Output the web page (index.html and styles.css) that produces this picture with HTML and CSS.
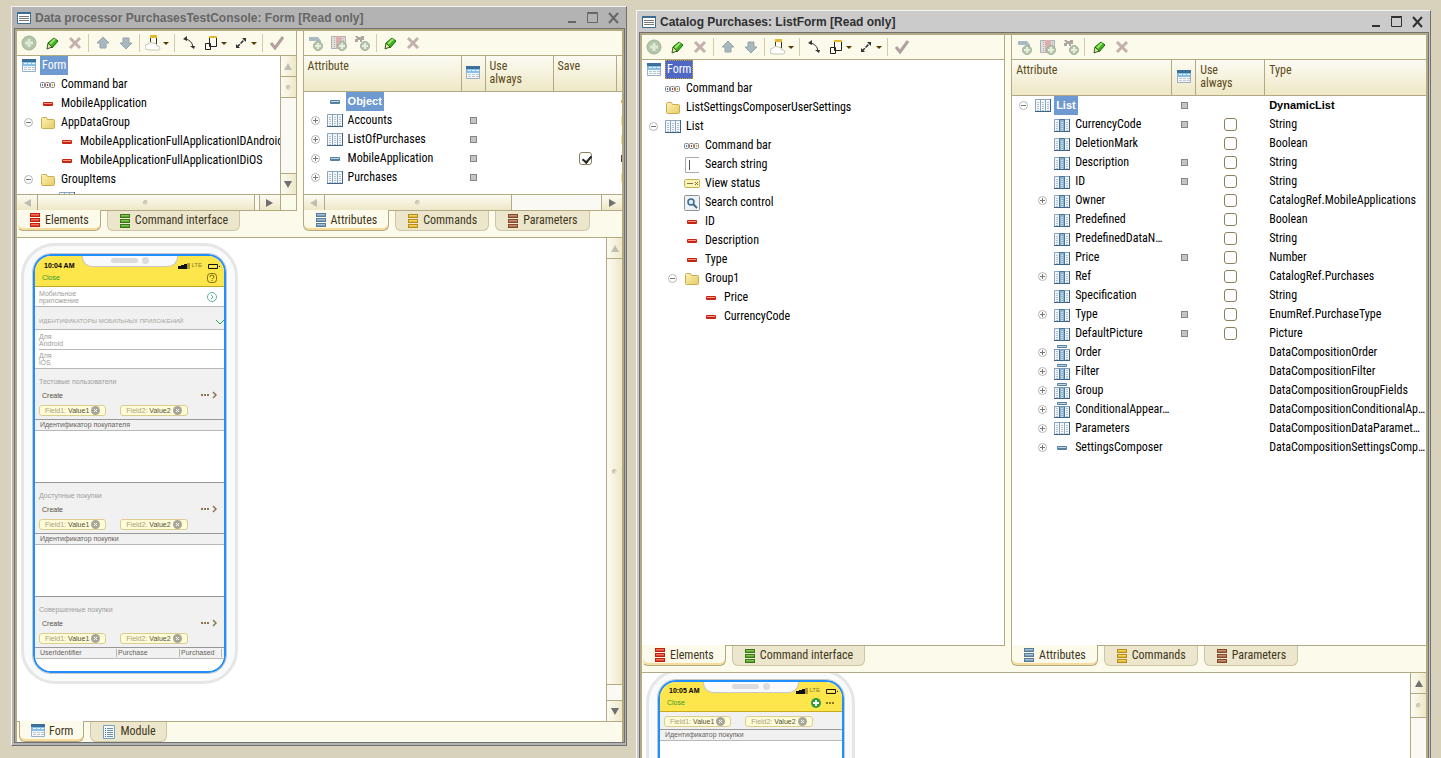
FILE: index.html
```html
<!DOCTYPE html>
<html lang="en">
<head>
  <meta charset="UTF-8">
  <meta name="viewport" content="width=device-width, initial-scale=1.0">
  <title>Designer</title>
  <link rel="stylesheet" href="styles.css">
</head>
<body>
  <!-- Icon set -->
  <svg class="sprite" aria-hidden="true">
    <defs>
      <linearGradient id="g-red" x1="0" y1="0" x2="0" y2="1"><stop offset="0" stop-color="#ff9a80"/><stop offset="1" stop-color="#d8200c"/></linearGradient>
      <linearGradient id="g-green" x1="0" y1="0" x2="0" y2="1"><stop offset="0" stop-color="#a8e070"/><stop offset="1" stop-color="#3c8c18"/></linearGradient>
      <linearGradient id="g-blue" x1="0" y1="0" x2="0" y2="1"><stop offset="0" stop-color="#c4dcec"/><stop offset="1" stop-color="#5c86a8"/></linearGradient>
      <linearGradient id="g-gold" x1="0" y1="0" x2="0" y2="1"><stop offset="0" stop-color="#fff080"/><stop offset="1" stop-color="#d8a018"/></linearGradient>
      <linearGradient id="g-brown" x1="0" y1="0" x2="0" y2="1"><stop offset="0" stop-color="#dca888"/><stop offset="1" stop-color="#94583c"/></linearGradient>
      <linearGradient id="g-folder" x1="0" y1="0" x2="1" y2="1"><stop offset="0" stop-color="#fdf3b0"/><stop offset="1" stop-color="#e6cb68"/></linearGradient>
    </defs>
    <symbol id="i-form" viewBox="0 0 16 16">
      <path fill="#f4f8fb" stroke="#9ab0c2" d="M1.500 2.500h13v11h-13z"/>
      <path fill="#3a7099" d="M1 1h14v3H1z"/><path fill="#86c0e8" d="M2 4h12v4H2z"/>
      <path stroke="#e4f2fb" stroke-dasharray="3 1" d="M3 5.500h11"/>
      <path stroke="#bcc6ce" stroke-dasharray="3 1" d="M3 9.500h11M3 11.500h11"/>
    </symbol>
    <symbol id="i-win" viewBox="0 0 16 16">
      <path fill="#fff" stroke="#3c6c90" d="M1.500 2.500h13v11h-13z"/>
      <path fill="#3c6c90" d="M1 2h14v2H1z"/>
      <path stroke="#777" d="M3 6.500h10M3 8.500h10M3 10.500h10"/>
    </symbol>
    <symbol id="i-module" viewBox="0 0 16 16">
      <path fill="#f6fafd" stroke="#7ba0bc" d="M2.500 1.500h11v13h-11z"/>
      <path stroke="#6f8ea8" d="M6 4.500h6M6 6.500h6M6 8.500h6M6 10.500h6M6 12.500h6"/>
      <path stroke="#3c6c90" d="M4 4.500h1M4 6.500h1M4 8.500h1M4 10.500h1M4 12.500h1"/>
    </symbol>
    <symbol id="i-cmdbar" viewBox="0 0 16 16">
      <g fill="#f5f5f5" stroke="#858585"><rect x=".5" y="5.500" width="4" height="5" rx="1"/><rect x="5.500" y="5.500" width="4" height="5" rx="1"/><rect x="10.500" y="5.500" width="4" height="5" rx="1"/></g>
      <path fill="#3f80c8" d="M2 7h1v2H2z"/><path fill="#d82c18" d="M7 7h1v2H7z"/><path fill="#d8a818" d="M12 7h1v2h-1z"/>
    </symbol>
    <symbol id="i-item" viewBox="0 0 16 16"><rect x="3" y="6" width="10" height="4" rx="1" fill="#c82414"/><path fill="#ff9a80" d="M4 7h8v1H4z"/></symbol>
    <symbol id="i-attr" viewBox="0 0 16 16"><rect x="3" y="6" width="10" height="4" rx="1" fill="#5680a0"/><path fill="#bcd6e8" d="M4 7h8v1H4z"/></symbol>
    <symbol id="i-folder" viewBox="0 0 16 16">
      <path fill="url(#g-folder)" stroke="#c9ad54" d="M1.500 12.500v-9q0-1 1-1h4l1 2h6q1 0 1 1v7q0 1-1 1h-11q-1 0-1-1z"/>
    </symbol>
    <symbol id="i-table" viewBox="0 0 16 16">
      <path fill="#f4f8fb" stroke="#8ba6bc" d="M.5 1.500h15v12H.5zM5.500 1.500v12M10.500 1.500v12"/>
      <path stroke="#3c6488" d="M0 13.500h16M15.500 1v13"/>
      <path stroke="#b4c0ca" stroke-dasharray="1 1" stroke-width="2" d="M3 4v9M8 4v9M13 4v9"/>
    </symbol>
    <symbol id="i-column" viewBox="0 0 16 16">
      <path fill="#eff4f8" stroke="#8ba6bc" d="M.5 2.500h15v12H.5z"/>
      <path fill="#8ab4d2" stroke="#4a7496" d="M5.500 2.500h5v12h-5z"/>
      <path stroke="#3c6488" d="M0 14.500h16M15.500 2v13"/>
      <path stroke="#b4c0ca" stroke-dasharray="1 1" stroke-width="2" d="M3 5v9M13 5v9"/>
      <path stroke="#c4dcec" stroke-dasharray="1 1" stroke-width="2" d="M8 5v9"/>
    </symbol>
    <symbol id="i-column-set" viewBox="0 0 16 16">
      <use href="#i-column" y="1"/>
      <path fill="#fff" d="M0 0h16v4H0z"/>
      <rect x="3" y="0" width="10" height="3" rx="1" fill="#5680a0"/><path fill="#bcd6e8" d="M4 1h8v1H4z"/>
      <path stroke="#7c9ab4" d="M0 4.500h16"/>
      <path stroke="#3c6488" d="M0 15.500h16"/>
    </symbol>
    <symbol id="i-string" viewBox="0 0 16 16"><path fill="none" stroke="#aaa" d="M15 .5H1.500v15H15"/><path stroke="#555" d="M5.500 3v10"/></symbol>
    <symbol id="i-status" viewBox="0 0 16 16"><rect x=".5" y="3.500" width="15" height="8" rx="1" fill="#fbf4b8" stroke="#c8b254"/><path stroke="#88743c" d="M3 7.500h6M11 6l3 3M14 6l-3 3"/></symbol>
    <symbol id="i-search" viewBox="0 0 16 16"><rect x=".5" y=".5" width="15" height="15" rx="1" fill="#f0f1f2" stroke="#8c9298"/><circle cx="7" cy="7" r="3" fill="#dcecf6" stroke="#3e6a92" stroke-width="1.500"/><path stroke="#3e6a92" stroke-width="2" d="M9 9l4 4"/></symbol>
    <symbol id="i-add" viewBox="0 0 16 16"><circle cx="8" cy="8" r="7" fill="#b4c6a8" stroke="#a2b29a"/><path stroke="#dfe8d4" stroke-width="3" d="M8 4v8M4 8h8"/></symbol>
    <symbol id="i-edit" viewBox="0 0 16 16"><path fill="#3eb41c" stroke="#186808" d="M4 8l6-5 4 3-6 7z"/><path stroke="#98e870" stroke-width="2" d="M6 9l5-5"/><path fill="#e8e0b8" stroke="#2c6010" d="M4 8l4 4-5 2z"/></symbol>
    <symbol id="i-del" viewBox="0 0 16 16"><path stroke="#c4b0ac" stroke-width="3" d="M3 3l10 10M13 3L3 13"/></symbol>
    <symbol id="i-up" viewBox="0 0 16 16"><path fill="#a9b7bf" stroke="#94a5ae" d="M8 2l6 6h-3v5H5V8H2z"/></symbol>
    <symbol id="i-down" viewBox="0 0 16 16"><path fill="#a9b7bf" stroke="#94a5ae" d="M8 14l6-6h-3V3H5v5H2z"/></symbol>
    <symbol id="i-cloud" viewBox="0 0 16 16"><path fill="#fffdf0" stroke="#333" d="M5.500 1.500h6v9h-6z"/><path fill="#e6b830" d="M5 0h7v3H5z"/><path fill="#fff" stroke="#c8c4b4" d="M3 15a3 3 0 0 1 0-6q2-3 5-1 4 0 4 3 3 0 3 2t-2 2z"/></symbol>
    <symbol id="i-rotate" viewBox="0 0 16 16"><path fill="none" stroke="#333" d="M4 4q7 1 8 8"/><path fill="#333" d="M2 4l4-3v5zM13 14l-4-3h5z"/></symbol>
    <symbol id="i-device" viewBox="0 0 16 16"><path fill="#fffdf0" stroke="#222" d="M6.500 1.500h7v10h-7zM2.500 8.500h5v6h-5z"/><path fill="#e6b830" d="M6 1h8v2H6z"/></symbol>
    <symbol id="i-scale" viewBox="0 0 16 16"><path stroke="#333" stroke-width="1.500" stroke-dasharray="4 1" d="M4 12l8-8"/><path fill="#333" d="M13 3v4L9 3zM3 13V9l4 4z"/></symbol>
    <symbol id="i-check" viewBox="0 0 16 16"><path fill="none" stroke="#b2a0a0" stroke-width="3" d="M2 8l4 5 8-11"/></symbol>
    <symbol id="i-add-attr" viewBox="0 0 16 16"><path fill="#a8bac4" d="M1 2h9l3 4v2H9V6H1z"/><circle cx="10" cy="11" r="4.500" fill="#b4c6a8" stroke="#a2b29a"/><path stroke="#e8efe0" stroke-width="2" d="M10 8v6M7 11h6"/></symbol>
    <symbol id="i-add-col" viewBox="0 0 16 16"><path fill="#e2dfd8" stroke="#a9b2b8" d="M.5 1.500h14v12H.5z"/><path fill="#dcb0ac" d="M5 1h6v13H5z"/><path stroke="#a9b2b8" stroke-dasharray="1 1" d="M3.500 3v10M12.500 3v10"/><circle cx="11" cy="11" r="4.500" fill="#b4c6a8" stroke="#a2b29a"/><path stroke="#e8efe0" stroke-width="2" d="M11 8v6M8 11h6"/></symbol>
    <symbol id="i-add-fx" viewBox="0 0 16 16"><path fill="#b0a8a0" d="M1 1h3v1h3V1h3v4H8v2H6V5H4v2H1V4h2z"/><circle cx="11" cy="11" r="4.500" fill="#b4c6a8" stroke="#a2b29a"/><path stroke="#e8efe0" stroke-width="2" d="M11 8v6M8 11h6"/></symbol>
    <symbol id="i-plus" viewBox="0 0 9 9"><circle cx="4.500" cy="4.500" r="4" fill="#fff" stroke="#b4b4b4"/><path stroke="#777" d="M2 4.500h5M4.500 2v5"/></symbol>
    <symbol id="i-minus" viewBox="0 0 9 9"><circle cx="4.500" cy="4.500" r="4" fill="#fff" stroke="#b4b4b4"/><path stroke="#777" d="M2 4.500h5"/></symbol>
    <symbol id="i-bars" viewBox="0 0 10 14">
      <g stroke="currentColor"><rect x=".5" y=".5" width="9" height="3"/><rect x=".5" y="5.500" width="9" height="3"/><rect x=".5" y="10.500" width="9" height="3"/></g>
    </symbol>
    <symbol id="i-signal" viewBox="0 0 12 6"><path fill="#111" d="M0 3h3V2h3V1h3v5H0z"/><path fill="#b09a30" d="M9 0h3v6H9z"/></symbol>
    <symbol id="i-battery" viewBox="0 0 12 6"><path fill="none" stroke="#111" d="M.5 1.500h9v4h-9z"/><path fill="#111" d="M11 3h1v1h-1z"/></symbol>
    <symbol id="i-x" viewBox="0 0 9 9"><circle cx="4.500" cy="4.500" r="4.500" fill="#a8a698"/><path stroke="#fff" d="M3 3l3 3M6 3L3 6"/></symbol>
    <symbol id="i-more" viewBox="0 0 16 8"><path fill="#8a7650" d="M0 3h2v2H0zM3 3h2v2H3zM6 3h2v2H6z"/><path fill="none" stroke="#8a7650" stroke-width="1.500" d="M12 1l3 3-3 3"/></symbol>
  </svg>

  <main class="desktop">
    <!-- Data processor form -->
    <section class="window inactive">
      <header class="titlebar">
        <svg class="icon"><use href="#i-win"/></svg>
        <h1>Data processor PurchasesTestConsole: Form [Read only]</h1>
        <button class="win-btn" aria-label="Minimize"><svg viewBox="0 0 12 12"><path d="M1 10h8"/></svg></button>
        <button class="win-btn" aria-label="Maximize"><svg viewBox="0 0 12 12"><path class="thin" d="M.5 1.500h10v9H.5zM0 .5h11"/></svg></button>
        <button class="win-btn" aria-label="Close"><svg viewBox="0 0 12 12"><path d="M2 1l9 10M11 1L2 11"/></svg></button>
      </header>
      <div class="client">
        <div class="split">
          <div class="pane elements">
            <div class="toolbar">
              <button aria-label="Add"><svg class="icon"><use href="#i-add"/></svg></button>
              <button aria-label="Edit"><svg class="icon"><use href="#i-edit"/></svg></button>
              <button aria-label="Delete"><svg class="icon"><use href="#i-del"/></svg></button>
              <i class="sep"></i>
              <button aria-label="Move up"><svg class="icon"><use href="#i-up"/></svg></button>
              <button aria-label="Move down"><svg class="icon"><use href="#i-down"/></svg></button>
              <i class="sep"></i>
              <button class="drop" aria-label="Cloud"><svg class="icon"><use href="#i-cloud"/></svg></button>
              <i class="sep"></i>
              <button aria-label="Rotate"><svg class="icon"><use href="#i-rotate"/></svg></button>
              <button class="drop" aria-label="Device"><svg class="icon"><use href="#i-device"/></svg></button>
              <button class="drop" aria-label="Scale"><svg class="icon"><use href="#i-scale"/></svg></button>
              <i class="sep"></i>
              <button aria-label="Check"><svg class="icon"><use href="#i-check"/></svg></button>
            </div>
            <div class="scroll-area">
              <ul class="tree">
                <li><svg class="icon"><use href="#i-form"/></svg><span class="label selected">Form</span></li>
                <li class="l1"><svg class="icon"><use href="#i-cmdbar"/></svg><span class="label">Command bar</span></li>
                <li class="l1"><svg class="icon"><use href="#i-item"/></svg><span class="label">MobileApplication</span></li>
                <li class="l1"><button class="expander" aria-label="Collapse"><svg><use href="#i-minus"/></svg></button><svg class="icon"><use href="#i-folder"/></svg><span class="label">AppDataGroup</span></li>
                <li class="l2"><svg class="icon"><use href="#i-item"/></svg><span class="label">MobileApplicationFullApplicationIDAndroid</span></li>
                <li class="l2"><svg class="icon"><use href="#i-item"/></svg><span class="label">MobileApplicationFullApplicationIDiOS</span></li>
                <li class="l1"><button class="expander" aria-label="Collapse"><svg><use href="#i-minus"/></svg></button><svg class="icon"><use href="#i-folder"/></svg><span class="label">GroupItems</span></li>
                <li class="l2"><svg class="icon"><use href="#i-table"/></svg></li>
              </ul>
              <div class="vscroll"><i class="arrow up off"></i><i class="thumb short"></i><i class="track"></i><i class="arrow down"></i></div>
              <div class="hscroll"><i class="arrow left off"></i><i class="thumb"></i><i class="track narrow"></i><i class="arrow right"></i></div>
              <div class="corner"></div>
            </div>
          </div>
          <div class="pane attributes">
            <div class="toolbar">
              <button aria-label="Add attribute"><svg class="icon"><use href="#i-add-attr"/></svg></button>
              <button aria-label="Add column"><svg class="icon"><use href="#i-add-col"/></svg></button>
              <button aria-label="Add parameter"><svg class="icon"><use href="#i-add-fx"/></svg></button>
              <i class="sep"></i>
              <button aria-label="Edit"><svg class="icon"><use href="#i-edit"/></svg></button>
              <button aria-label="Delete"><svg class="icon"><use href="#i-del"/></svg></button>
            </div>
            <div class="table-area">
              <table>
                <colgroup><col class="c-name"><col class="c-used"><col class="c-use"><col class="c-save"><col></colgroup>
                <thead><tr><th>Attribute</th><th class="mark"><svg class="icon"><use href="#i-form"/></svg></th><th>Use<br>always</th><th>Save</th><th></th></tr></thead>
                <tbody>
                  <tr><td><div class="cell l1"><svg class="icon"><use href="#i-attr"/></svg><span class="label selected bold">Object</span></div></td><td></td><td></td><td></td><td class="edge orange"></td></tr>
                  <tr><td><div class="cell l1"><button class="expander" aria-label="Expand"><svg><use href="#i-plus"/></svg></button><svg class="icon"><use href="#i-table"/></svg><span class="label">Accounts</span></div></td><td class="mark"><i class="square"></i></td><td></td><td></td><td class="edge"></td></tr>
                  <tr><td><div class="cell l1"><button class="expander" aria-label="Expand"><svg><use href="#i-plus"/></svg></button><svg class="icon"><use href="#i-table"/></svg><span class="label">ListOfPurchases</span></div></td><td class="mark"><i class="square"></i></td><td></td><td></td><td class="edge"></td></tr>
                  <tr><td><div class="cell l1"><button class="expander" aria-label="Expand"><svg><use href="#i-plus"/></svg></button><svg class="icon"><use href="#i-attr"/></svg><span class="label">MobileApplication</span></div></td><td class="mark"><i class="square"></i></td><td></td><td class="mark"><input type="checkbox" aria-label="Save MobileApplication" checked></td><td class="edge dark"></td></tr>
                  <tr><td><div class="cell l1"><button class="expander" aria-label="Expand"><svg><use href="#i-plus"/></svg></button><svg class="icon"><use href="#i-table"/></svg><span class="label">Purchases</span></div></td><td class="mark"><i class="square"></i></td><td></td><td></td><td class="edge"></td></tr>
                </tbody>
              </table>
              <div class="hscroll"><i class="arrow left off"></i><i class="thumb"></i><i class="track third"></i><i class="arrow right"></i></div>
            </div>
          </div>
        </div>
        <div class="strip">
          <nav class="tabs elements">
            <button class="tab active"><svg class="bars red"><use href="#i-bars"/></svg>Elements</button>
            <button class="tab"><svg class="bars green"><use href="#i-bars"/></svg>Command interface</button>
          </nav>
          <nav class="tabs attributes">
            <button class="tab active"><svg class="bars blue"><use href="#i-bars"/></svg>Attributes</button>
            <button class="tab"><svg class="bars gold"><use href="#i-bars"/></svg>Commands</button>
            <button class="tab"><svg class="bars brown"><use href="#i-bars"/></svg>Parameters</button>
          </nav>
        </div>
        <div class="preview">
          <div class="canvas">
            <div class="phone">
              <div class="screen">
                <div class="notch"><i class="speaker"></i><i class="camera"></i></div>
                <div class="app-head">
                  <div class="status"><b>10:04 AM</b><svg class="signal"><use href="#i-signal"/></svg><span>LTE</span><svg class="battery"><use href="#i-battery"/></svg></div>
                  <div class="app-bar"><a href="#">Close</a><svg class="help" viewBox="0 0 10 10"><rect x=".5" y=".5" width="9" height="9" rx="3"/><path d="M3 4q0-2 2-2t2 2q0 1-2 2M5 7v1"/></svg></div>
                </div>
                <div class="field"><span>Мобильное<br>приложение</span><svg class="go" viewBox="0 0 10 10"><circle cx="5" cy="5" r="4.500"/><path d="M4 3l2 2-2 2"/></svg></div>
                <div class="section"><span>ИДЕНТИФИКАТОРЫ МОБИЛЬНЫХ ПРИЛОЖЕНИЙ</span><svg class="chev" viewBox="0 0 8 6"><path d="M0 1l4 4 4-4"/></svg></div>
                <div class="field inset"><span>Для<br>Android</span></div>
                <div class="field"><span>Для<br>iOS</span></div>
                <div class="group">
                  <h2>Тестовые пользователи</h2>
                  <div class="create"><a href="#">Create</a><svg class="more"><use href="#i-more"/></svg></div>
                  <div class="chips"><span class="chip"><em>Field1:</em> Value1<svg><use href="#i-x"/></svg></span><span class="chip"><em>Field2:</em> Value2<svg><use href="#i-x"/></svg></span></div>
                </div>
                <div class="list-head"><span>Идентификатор покупателя</span></div>
                <div class="list-body"></div>
                <div class="group">
                  <h2>Доступные покупки</h2>
                  <div class="create"><a href="#">Create</a><svg class="more"><use href="#i-more"/></svg></div>
                  <div class="chips"><span class="chip"><em>Field1:</em> Value1<svg><use href="#i-x"/></svg></span><span class="chip"><em>Field2:</em> Value2<svg><use href="#i-x"/></svg></span></div>
                </div>
                <div class="list-head"><span>Идентификатор покупки</span></div>
                <div class="list-body"></div>
                <div class="group">
                  <h2>Совершенные покупки</h2>
                  <div class="create"><a href="#">Create</a><svg class="more"><use href="#i-more"/></svg></div>
                  <div class="chips"><span class="chip"><em>Field1:</em> Value1<svg><use href="#i-x"/></svg></span><span class="chip"><em>Field2:</em> Value2<svg><use href="#i-x"/></svg></span></div>
                </div>
                <div class="list-head cols"><span>UserIdentifier</span><span>Purchase</span><span>Purchased</span><span></span></div>
                <div class="list-end"></div>
              </div>
            </div>
          </div>
          <div class="vscroll"><i class="arrow up off"></i><i class="thumb"></i><i class="track tiny"></i><i class="arrow down"></i></div>
        </div>
        <nav class="tabs bottom">
          <button class="tab active"><svg class="icon"><use href="#i-form"/></svg>Form</button>
          <button class="tab"><svg class="icon"><use href="#i-module"/></svg>Module</button>
        </nav>
      </div>
    </section>

    <!-- Catalog list form -->
    <section class="window current">
      <header class="titlebar">
        <svg class="icon"><use href="#i-win"/></svg>
        <h1>Catalog Purchases: ListForm [Read only]</h1>
        <button class="win-btn" aria-label="Minimize"><svg viewBox="0 0 12 12"><path d="M1 10h8"/></svg></button>
        <button class="win-btn" aria-label="Maximize"><svg viewBox="0 0 12 12"><path class="thin" d="M.5 1.500h10v9H.5zM0 .5h11"/></svg></button>
        <button class="win-btn" aria-label="Close"><svg viewBox="0 0 12 12"><path d="M2 1l9 10M11 1L2 11"/></svg></button>
      </header>
      <div class="client">
        <div class="split">
          <div class="pane elements">
            <div class="toolbar">
              <button aria-label="Add"><svg class="icon"><use href="#i-add"/></svg></button>
              <button aria-label="Edit"><svg class="icon"><use href="#i-edit"/></svg></button>
              <button aria-label="Delete"><svg class="icon"><use href="#i-del"/></svg></button>
              <i class="sep"></i>
              <button aria-label="Move up"><svg class="icon"><use href="#i-up"/></svg></button>
              <button aria-label="Move down"><svg class="icon"><use href="#i-down"/></svg></button>
              <i class="sep"></i>
              <button class="drop" aria-label="Cloud"><svg class="icon"><use href="#i-cloud"/></svg></button>
              <i class="sep"></i>
              <button aria-label="Rotate"><svg class="icon"><use href="#i-rotate"/></svg></button>
              <button class="drop" aria-label="Device"><svg class="icon"><use href="#i-device"/></svg></button>
              <button class="drop" aria-label="Scale"><svg class="icon"><use href="#i-scale"/></svg></button>
              <i class="sep"></i>
              <button aria-label="Check"><svg class="icon"><use href="#i-check"/></svg></button>
            </div>
            <ul class="tree">
              <li><svg class="icon"><use href="#i-form"/></svg><span class="label selected focus">Form</span></li>
              <li class="l1"><svg class="icon"><use href="#i-cmdbar"/></svg><span class="label">Command bar</span></li>
              <li class="l1"><svg class="icon"><use href="#i-folder"/></svg><span class="label">ListSettingsComposerUserSettings</span></li>
              <li class="l1"><button class="expander" aria-label="Collapse"><svg><use href="#i-minus"/></svg></button><svg class="icon"><use href="#i-table"/></svg><span class="label">List</span></li>
              <li class="l2"><svg class="icon"><use href="#i-cmdbar"/></svg><span class="label">Command bar</span></li>
              <li class="l2"><svg class="icon"><use href="#i-string"/></svg><span class="label">Search string</span></li>
              <li class="l2"><svg class="icon"><use href="#i-status"/></svg><span class="label">View status</span></li>
              <li class="l2"><svg class="icon"><use href="#i-search"/></svg><span class="label">Search control</span></li>
              <li class="l2"><svg class="icon"><use href="#i-item"/></svg><span class="label">ID</span></li>
              <li class="l2"><svg class="icon"><use href="#i-item"/></svg><span class="label">Description</span></li>
              <li class="l2"><svg class="icon"><use href="#i-item"/></svg><span class="label">Type</span></li>
              <li class="l2"><button class="expander" aria-label="Collapse"><svg><use href="#i-minus"/></svg></button><svg class="icon"><use href="#i-folder"/></svg><span class="label">Group1</span></li>
              <li class="l3"><svg class="icon"><use href="#i-item"/></svg><span class="label">Price</span></li>
              <li class="l3"><svg class="icon"><use href="#i-item"/></svg><span class="label">CurrencyCode</span></li>
            </ul>
          </div>
          <div class="pane attributes">
            <div class="toolbar">
              <button aria-label="Add attribute"><svg class="icon"><use href="#i-add-attr"/></svg></button>
              <button aria-label="Add column"><svg class="icon"><use href="#i-add-col"/></svg></button>
              <button aria-label="Add parameter"><svg class="icon"><use href="#i-add-fx"/></svg></button>
              <i class="sep"></i>
              <button aria-label="Edit"><svg class="icon"><use href="#i-edit"/></svg></button>
              <button aria-label="Delete"><svg class="icon"><use href="#i-del"/></svg></button>
            </div>
            <div class="table-area">
              <table>
                <colgroup><col class="c-name"><col class="c-used"><col class="c-use"><col></colgroup>
                <thead><tr><th>Attribute</th><th class="mark"><svg class="icon"><use href="#i-form"/></svg></th><th>Use<br>always</th><th>Type</th></tr></thead>
                <tbody>
                  <tr><td><div class="cell l1"><button class="expander" aria-label="Collapse"><svg><use href="#i-minus"/></svg></button><svg class="icon"><use href="#i-table"/></svg><span class="label selected bold">List</span></div></td><td class="mark"><i class="square"></i></td><td></td><td class="bold">DynamicList</td></tr>
                  <tr><td><div class="cell l2"><svg class="icon"><use href="#i-column"/></svg><span class="label">CurrencyCode</span></div></td><td class="mark"><i class="square"></i></td><td class="mark"><input type="checkbox" aria-label="Use always CurrencyCode"></td><td>String</td></tr>
                  <tr><td><div class="cell l2"><svg class="icon"><use href="#i-column"/></svg><span class="label">DeletionMark</span></div></td><td></td><td class="mark"><input type="checkbox" aria-label="Use always DeletionMark"></td><td>Boolean</td></tr>
                  <tr><td><div class="cell l2"><svg class="icon"><use href="#i-column"/></svg><span class="label">Description</span></div></td><td class="mark"><i class="square"></i></td><td class="mark"><input type="checkbox" aria-label="Use always Description"></td><td>String</td></tr>
                  <tr><td><div class="cell l2"><svg class="icon"><use href="#i-column"/></svg><span class="label">ID</span></div></td><td class="mark"><i class="square"></i></td><td class="mark"><input type="checkbox" aria-label="Use always ID"></td><td>String</td></tr>
                  <tr><td><div class="cell l2"><button class="expander" aria-label="Expand"><svg><use href="#i-plus"/></svg></button><svg class="icon"><use href="#i-column"/></svg><span class="label">Owner</span></div></td><td></td><td class="mark"><input type="checkbox" aria-label="Use always Owner"></td><td>CatalogRef.MobileApplications</td></tr>
                  <tr><td><div class="cell l2"><svg class="icon"><use href="#i-column"/></svg><span class="label">Predefined</span></div></td><td></td><td class="mark"><input type="checkbox" aria-label="Use always Predefined"></td><td>Boolean</td></tr>
                  <tr><td><div class="cell l2"><svg class="icon"><use href="#i-column"/></svg><span class="label">PredefinedDataN…</span></div></td><td></td><td class="mark"><input type="checkbox" aria-label="Use always PredefinedDataN"></td><td>String</td></tr>
                  <tr><td><div class="cell l2"><svg class="icon"><use href="#i-column"/></svg><span class="label">Price</span></div></td><td class="mark"><i class="square"></i></td><td class="mark"><input type="checkbox" aria-label="Use always Price"></td><td>Number</td></tr>
                  <tr><td><div class="cell l2"><button class="expander" aria-label="Expand"><svg><use href="#i-plus"/></svg></button><svg class="icon"><use href="#i-column"/></svg><span class="label">Ref</span></div></td><td></td><td class="mark"><input type="checkbox" aria-label="Use always Ref"></td><td>CatalogRef.Purchases</td></tr>
                  <tr><td><div class="cell l2"><svg class="icon"><use href="#i-column"/></svg><span class="label">Specification</span></div></td><td></td><td class="mark"><input type="checkbox" aria-label="Use always Specification"></td><td>String</td></tr>
                  <tr><td><div class="cell l2"><button class="expander" aria-label="Expand"><svg><use href="#i-plus"/></svg></button><svg class="icon"><use href="#i-column"/></svg><span class="label">Type</span></div></td><td class="mark"><i class="square"></i></td><td class="mark"><input type="checkbox" aria-label="Use always Type"></td><td>EnumRef.PurchaseType</td></tr>
                  <tr><td><div class="cell l2"><svg class="icon"><use href="#i-column"/></svg><span class="label">DefaultPicture</span></div></td><td class="mark"><i class="square"></i></td><td class="mark"><input type="checkbox" aria-label="Use always DefaultPicture"></td><td>Picture</td></tr>
                  <tr><td><div class="cell l2"><button class="expander" aria-label="Expand"><svg><use href="#i-plus"/></svg></button><svg class="icon"><use href="#i-column-set"/></svg><span class="label">Order</span></div></td><td></td><td></td><td>DataCompositionOrder</td></tr>
                  <tr><td><div class="cell l2"><button class="expander" aria-label="Expand"><svg><use href="#i-plus"/></svg></button><svg class="icon"><use href="#i-column-set"/></svg><span class="label">Filter</span></div></td><td></td><td></td><td>DataCompositionFilter</td></tr>
                  <tr><td><div class="cell l2"><button class="expander" aria-label="Expand"><svg><use href="#i-plus"/></svg></button><svg class="icon"><use href="#i-column-set"/></svg><span class="label">Group</span></div></td><td></td><td></td><td>DataCompositionGroupFields</td></tr>
                  <tr><td><div class="cell l2"><button class="expander" aria-label="Expand"><svg><use href="#i-plus"/></svg></button><svg class="icon"><use href="#i-column-set"/></svg><span class="label">ConditionalAppear…</span></div></td><td></td><td></td><td>DataCompositionConditionalAp…</td></tr>
                  <tr><td><div class="cell l2"><button class="expander" aria-label="Expand"><svg><use href="#i-plus"/></svg></button><svg class="icon"><use href="#i-table"/></svg><span class="label">Parameters</span></div></td><td></td><td></td><td>DataCompositionDataParamet…</td></tr>
                  <tr><td><div class="cell l2"><button class="expander" aria-label="Expand"><svg><use href="#i-plus"/></svg></button><svg class="icon"><use href="#i-attr"/></svg><span class="label">SettingsComposer</span></div></td><td></td><td></td><td>DataCompositionSettingsComp…</td></tr>
                </tbody>
              </table>
            </div>
          </div>
        </div>
        <div class="strip">
          <nav class="tabs elements">
            <button class="tab active"><svg class="bars red"><use href="#i-bars"/></svg>Elements</button>
            <button class="tab"><svg class="bars green"><use href="#i-bars"/></svg>Command interface</button>
          </nav>
          <nav class="tabs attributes">
            <button class="tab active"><svg class="bars blue"><use href="#i-bars"/></svg>Attributes</button>
            <button class="tab"><svg class="bars gold"><use href="#i-bars"/></svg>Commands</button>
            <button class="tab"><svg class="bars brown"><use href="#i-bars"/></svg>Parameters</button>
          </nav>
        </div>
        <div class="preview">
          <div class="canvas">
            <div class="phone small">
              <div class="screen">
                <div class="notch"><i class="speaker"></i><i class="camera"></i></div>
                <div class="app-head">
                  <div class="status"><b>10:05 AM</b><svg class="signal"><use href="#i-signal"/></svg><span>LTE</span><svg class="battery"><use href="#i-battery"/></svg></div>
                  <div class="app-bar"><a href="#">Close</a><svg class="plus" viewBox="0 0 10 10"><circle cx="5" cy="5" r="5"/><path d="M5 2v6M2 5h6"/></svg><svg class="dots" viewBox="0 0 10 4"><path d="M1 1h2v2H1zM4 1h2v2H4zM7 1h2v2H7z"/></svg></div>
                </div>
                <div class="group search">
                  <div class="chips"><span class="chip"><em>Field1:</em> Value1<svg><use href="#i-x"/></svg></span><span class="chip"><em>Field2:</em> Value2<svg><use href="#i-x"/></svg></span></div>
                </div>
                <div class="list-head"><span>Идентификатор покупки</span></div>
                <div class="list-body"></div>
              </div>
            </div>
          </div>
          <div class="vscroll"><i class="arrow up"></i><i class="thumb short"></i><i class="track"></i></div>
        </div>
      </div>
    </section>
  </main>
</body>
</html>
```

FILE: styles.css
```css
* {
  margin: 0;
  padding: 0;
  box-sizing: border-box;
}

html, body {
  height: 100%;
  overflow: hidden;
}

body {
  background: #d8d2bc;
  color: #000;
  font: 12px/19px "Roboto Condensed", Roboto, "Liberation Sans", sans-serif;
}

button {
  background: none;
  border: 0;
  color: inherit;
  font: inherit;
}

i, em {
  font-style: normal;
}

a {
  text-decoration: none;
}

svg {
  display: block;
  flex: none;
}

.sprite {
  position: absolute;
  width: 0;
  height: 0;
}

.icon {
  width: 16px;
  height: 16px;
}

.bold {
  font-family: "Liberation Sans", Arial, sans-serif;
  font-size: 11px;
  font-weight: bold;
}

/* Desktop and windows */
.desktop {
  display: flex;
  gap: 9px;
  height: 100vh;
  padding: 6px 10px 0 11px;
}

.window {
  display: flex;
  flex-direction: column;
  min-width: 0;
  padding: 0 1px 2px 2px;
  border: 1px solid #f4f4f4;
  border-right-color: #707070;
  border-bottom-color: #707070;
}

.inactive {
  flex: 611 1 0;
  margin-bottom: 12px;
  background: #b3b3b3;
  color: #000;
}

.current {
  flex: 790 1 0;
  margin-top: 4px;
  padding-bottom: 0;
  border-bottom: 0;
  background: #cbcbcb;
}

.titlebar {
  display: flex;
  align-items: center;
  height: 21px;
  padding: 0 2px;
  color: #303030;
}

.inactive .titlebar {
  color: #666;
}

.titlebar h1 {
  flex: 1;
  padding: 2px 0 0 3px;
  font: bold 12px/19px "Liberation Sans", Arial, sans-serif;
  white-space: nowrap;
}

.win-btn {
  display: flex;
  justify-content: center;
  width: 20px;
}

.win-btn svg {
  width: 12px;
  height: 12px;
  fill: none;
  stroke: currentColor;
  stroke-width: 2;
}

.win-btn .thin {
  stroke-width: 1;
}

.client {
  display: grid;
  flex: 1;
  min-height: 0;
  border: solid #707070;
  border-width: 1px 1px 0;
  background: #fcfaea;
}

.inactive .client {
  grid-template-rows: minmax(0, 182fr) 27px minmax(0, 483fr) 21px;
  border-bottom-width: 1px;
}

.current .client {
  grid-template-rows: minmax(0, 613fr) 27px minmax(0, 85fr);
}

.split, .strip, .preview, .bottom {
  border: solid #b3a982;
  border-width: 0 2px;
}

/* Panes */
.split, .strip {
  display: flex;
  gap: 6px;
  min-height: 0;
}

.split {
  border-top-width: 2px;
}

.elements {
  flex: 280 1 0;
  min-width: 0;
}

.attributes {
  flex: 320 1 0;
  min-width: 0;
}

.pane {
  display: flex;
  flex-direction: column;
  border-bottom: 1px solid #b3a982;
  background: #fff;
}

.pane.elements {
  border-right: 1px solid #b3a982;
}

.pane.attributes {
  border-left: 1px solid #b3a982;
}

.toolbar {
  display: flex;
  flex: none;
  align-items: center;
  height: 25px;
  border-bottom: 1px solid #b3a982;
  background: #fcfaea;
}

.attributes .toolbar {
  padding-left: 1px;
}

.toolbar button {
  display: flex;
  align-items: center;
  justify-content: center;
  width: 23px;
}

.toolbar .drop {
  width: 30px;
  gap: 2px;
}

.drop::after {
  content: "";
  border: 3px solid transparent;
  border-top-color: #5a3c00;
  border-bottom: 0;
}

.sep {
  width: 1px;
  height: 18px;
  margin: 0 2px;
  background: #d2cbac;
}

/* Trees */
.tree {
  flex: 1;
  min-width: 0;
  min-height: 0;
  overflow: hidden;
  list-style: none;
  white-space: nowrap;
}

.tree li, .cell {
  display: flex;
  align-items: center;
  height: 19px;
  padding-left: 4px;
}

.tree .l1, .cell.l1 {
  padding-left: 23px;
}

.tree .l2, .cell.l2 {
  padding-left: 42px;
}

.tree .l3 {
  padding-left: 61px;
}

.label {
  margin-left: 3px;
  padding: 0 2px;
}

.selected {
  background: #6f99d1;
  color: #fff;
}

.focus {
  background: #4f68c6;
  outline: 1px dotted #c8a030;
  outline-offset: -1px;
}

.expander {
  width: 9px;
  height: 9px;
  margin-left: -16px;
  margin-right: 7px;
}

.expander svg {
  width: 9px;
  height: 9px;
}

/* Attribute tables */
.table-area {
  display: flex;
  flex: 1;
  flex-direction: column;
  justify-content: space-between;
  min-height: 0;
  overflow: hidden;
}

table {
  width: 100%;
  border-spacing: 0;
  table-layout: fixed;
}

.c-name {
  width: 158px;
}

.current .c-name {
  width: 160px;
}

.c-used {
  width: 24px;
}

.c-use {
  width: 68px;
}

.current .c-use {
  width: 69px;
}

.c-save {
  width: 63px;
}

th {
  height: 36px;
  padding: 4px 4px 0;
  border-right: 1px solid #b3a982;
  border-bottom: 1px solid #b3a982;
  background: linear-gradient(#fcfbf3, #eee8c6);
  color: #5c4a18;
  font-weight: normal;
  line-height: 13px;
  text-align: left;
  vertical-align: top;
}

th:last-child {
  border-right: 0;
}

th .icon {
  margin: 9px auto 0;
}

td {
  height: 19px;
  overflow: hidden;
  white-space: nowrap;
}

td:last-child {
  padding-left: 4px;
}

.mark {
  padding: 0;
  text-align: center;
}

.square {
  display: block;
  width: 7px;
  height: 7px;
  margin: 0 auto;
  border: 1px solid #868686;
  background: #c4c4c4;
}

input[type="checkbox"] {
  display: block;
  width: 13px;
  height: 13px;
  margin: 0 auto;
  appearance: none;
  border: 1px solid #8c805a;
  border-radius: 3px;
  background: #fff;
}

input[type="checkbox"]:checked::after {
  content: "";
  display: block;
  width: 4px;
  height: 7px;
  margin: 1px 0 0 4px;
  border: solid #222;
  border-width: 0 2px 2px 0;
  transform: rotate(40deg);
}

.edge {
  background: linear-gradient(#f6dc94, #f6dc94) 4px center / 2px 9px no-repeat;
}

.edge.orange {
  background: linear-gradient(#f0b050, #f0b050) 4px center / 2px 3px no-repeat;
}

.edge.dark {
  background: linear-gradient(#5a3c5a, #5a3c5a) 4px center / 2px 7px no-repeat;
}

/* Scroll bars */
.scroll-area {
  display: grid;
  flex: 1;
  grid-template-rows: minmax(0, 1fr) 16px;
  grid-template-columns: minmax(0, 1fr) 16px;
  min-height: 0;
}

.vscroll, .hscroll {
  display: flex;
  background: #faf9f3;
}

.vscroll {
  flex: none;
  flex-direction: column;
  width: 16px;
  border-left: 1px solid #b3a982;
}

.hscroll {
  flex: none;
  height: 16px;
  border-top: 1px solid #b3a982;
}

.corner {
  border: solid #b3a982;
  border-width: 1px 0 0 1px;
  background: #fcfaea;
}

.arrow, .thumb {
  display: flex;
  flex: none;
  align-items: center;
  justify-content: center;
  background: linear-gradient(90deg, #fcfbf2, #eee8c8);
}

.hscroll .arrow, .hscroll .thumb {
  background: linear-gradient(#fcfbf2, #eee8c8);
}

.vscroll .arrow {
  height: 21px;
  border-bottom: 1px solid #b3a982;
}

.vscroll .down {
  border-top: 1px solid #b3a982;
  border-bottom: 0;
}

.hscroll .arrow {
  width: 21px;
  border-right: 1px solid #b3a982;
}

.hscroll .right {
  border-left: 1px solid #b3a982;
  border-right: 0;
}

.arrow::after {
  content: "";
  border: 4px solid transparent;
}

.up::after {
  border-top: 0;
  border-bottom: 7px solid #707070;
}

.down::after {
  border-bottom: 0;
  border-top: 7px solid #707070;
}

.left::after {
  border-left: 0;
  border-right: 7px solid #707070;
}

.right::after {
  border-right: 0;
  border-left: 7px solid #707070;
}

.off::after {
  opacity: 0.4;
}

.thumb {
  flex: 1;
}

.vscroll .thumb {
  border-bottom: 1px solid #b3a982;
}

.hscroll .thumb {
  border-right: 1px solid #b3a982;
}

.thumb.short {
  flex: 0 0 21px;
}

.current .thumb.short {
  flex-basis: 24px;
}

.thumb::after {
  content: "";
  width: 5px;
  height: 5px;
  border-radius: 50%;
  background: linear-gradient(135deg, #b8b190, #f4f0dc);
}

.track {
  flex: 1;
}

.track.narrow {
  flex: 0 0 4px;
}

.track.tiny {
  flex: 0 0 15px;
}

.track.third {
  flex: 0 0 28%;
}

/* Tabs */
.strip {
  border-bottom: 1px solid #b3a982;
}

.tabs {
  display: flex;
  align-items: flex-start;
  gap: 6px;
}

.tab {
  display: flex;
  align-items: center;
  gap: 5px;
  height: 20px;
  padding: 0 11px 0 12px;
  border: 1px solid #ccc5a6;
  border-top: 0;
  border-radius: 0 0 6px 6px;
  background: #ece6cc;
  color: #40371c;
  white-space: nowrap;
}

.tab.active {
  position: relative;
  height: 21px;
  margin-top: -1px;
  border-color: #b3a982;
  background: #fcfaea;
  box-shadow: inset 0 -2px #f8dc9c;
}

.elements .tab:first-child {
  border-left-color: transparent;
}

.bars {
  width: 10px;
  height: 14px;
}

.red { color: #c02010; fill: url(#g-red); }
.green { color: #387818; fill: url(#g-green); }
.blue { color: #587c98; fill: url(#g-blue); }
.gold { color: #b88c18; fill: url(#g-gold); }
.brown { color: #84492c; fill: url(#g-brown); }

.bottom {
  padding-left: 2px;
  border-top: 1px solid #b3a982;
}

.bottom .tab {
  padding: 0 10px;
  gap: 3px;
}

/* Preview */
.preview {
  display: flex;
  min-height: 0;
  background: #fff;
}

.canvas {
  flex: 1;
  min-width: 0;
  overflow: hidden;
  padding: 5px 4px;
}

.phone {
  width: 217px;
  padding: 8px 9px;
  border: 3px solid #e6e6e6;
  border-radius: 34px;
  background: #f9fafc;
  font: 7px/7px "Liberation Sans", Arial, sans-serif;
}

.phone.small {
  width: 209px;
  margin-top: -9px;
  padding: 8px 8px 8px 9px;
}

.screen {
  position: relative;
  overflow: hidden;
  border: 2px solid #1e8fff;
  border-radius: 18px;
  outline: 1px solid #c8c8c8;
}

/* Sensor housing over the top of the screen */
.notch {
  position: absolute;
  top: -2px;
  left: 50%;
  display: flex;
  align-items: center;
  justify-content: center;
  gap: 4px;
  width: 96px;
  height: 13px;
  margin-left: -48px;
  border: 1px solid #c8c8c8;
  border-top: 0;
  border-radius: 0 0 10px 10px;
  background: #f9fafc;
}

.speaker {
  width: 27px;
  height: 5px;
  border-radius: 3px;
  background: #dcdcdc;
}

.camera {
  width: 7px;
  height: 7px;
  border-radius: 50%;
  background: #dcdcdc;
}

.app-head {
  height: 31px;
  border-bottom: 1px solid #c8a820;
  background: #fde54c;
}

.small .app-head {
  height: 30px;
}

.status {
  display: flex;
  align-items: center;
  gap: 1px;
  padding: 6px 4px 0 9px;
}

.small .status {
  padding-top: 5px;
}

.status b {
  flex: 1;
}

.status span {
  color: #8a7a28;
  font-size: 6px;
}

.signal, .battery {
  width: 12px;
  height: 6px;
}

.battery {
  margin-left: 5px;
}

.app-bar {
  display: flex;
  align-items: center;
  gap: 4px;
  height: 17px;
  padding: 0 7px;
}

.app-bar a {
  flex: 1;
  color: #2e9c2e;
}

.help, .go, .plus, .dots {
  width: 10px;
  height: 10px;
  fill: none;
  stroke: #806c10;
}

.go {
  stroke: #58b890;
}

.plus {
  fill: #2e9c3c;
  stroke: none;
}

.plus path {
  stroke: #fff;
  stroke-width: 2;
}

.dots {
  height: 4px;
  fill: #8a7620;
  stroke: none;
}

.field {
  display: flex;
  align-items: center;
  justify-content: space-between;
  height: 20px;
  padding: 0 7px 0 4px;
  border-bottom: 1px solid #b8b8b8;
  background: #fff;
  color: #a09c98;
}

.field.inset {
  margin-left: 4px;
  padding-left: 0;
}

.inset + .field {
  height: 19px;
}

.section {
  display: flex;
  align-items: flex-end;
  justify-content: space-between;
  height: 23px;
  padding: 0 0 4px 4px;
  border-bottom: 1px solid #b8b8b8;
  background: #f1f1f1;
  color: #a8a4a0;
  font-size: 6px;
}

.chev {
  width: 8px;
  height: 6px;
  fill: none;
  stroke: #2c9c60;
}

.group {
  height: 51px;
  padding: 9px 4px 0;
  border-bottom: 1px solid #989898;
  background: #f1f1f1;
}

.group.search {
  height: 18px;
  padding-top: 4px;
}

.group h2 {
  color: #a0a0a0;
  font-size: 7px;
  font-weight: normal;
}

.create {
  display: flex;
  align-items: center;
  justify-content: space-between;
  height: 20px;
  padding: 0 3px;
}

.create a {
  color: #555044;
}

.more {
  width: 16px;
  height: 8px;
}

.chips {
  display: flex;
  gap: 14px;
}

.chip {
  display: flex;
  align-items: center;
  gap: 2px;
  height: 11px;
  padding: 0 5px;
  border: 1px solid #dccc90;
  border-radius: 3px;
  background: #fffcd8;
  color: #54503c;
  white-space: nowrap;
}

.chip em {
  color: #a8a080;
}

.chip svg {
  width: 9px;
  height: 9px;
}

.list-head {
  display: flex;
  height: 11px;
  padding: 1px 0 1px 5px;
  border-bottom: 1px solid #b8b8b8;
  background: #f1f1f1;
  color: #68625c;
  line-height: 8px;
}

.cols span {
  flex: none;
  width: 63px;
}

.cols span:first-child {
  width: 76px;
}

.cols span:nth-child(3) {
  width: 42px;
}

.cols span + span {
  padding-left: 1px;
  border-left: 1px solid #b8b8b8;
}

.list-body {
  height: 52px;
  border-bottom: 1px solid #989898;
  background: #fff;
}

.list-end {
  height: 12px;
  background: #fff;
}
```
